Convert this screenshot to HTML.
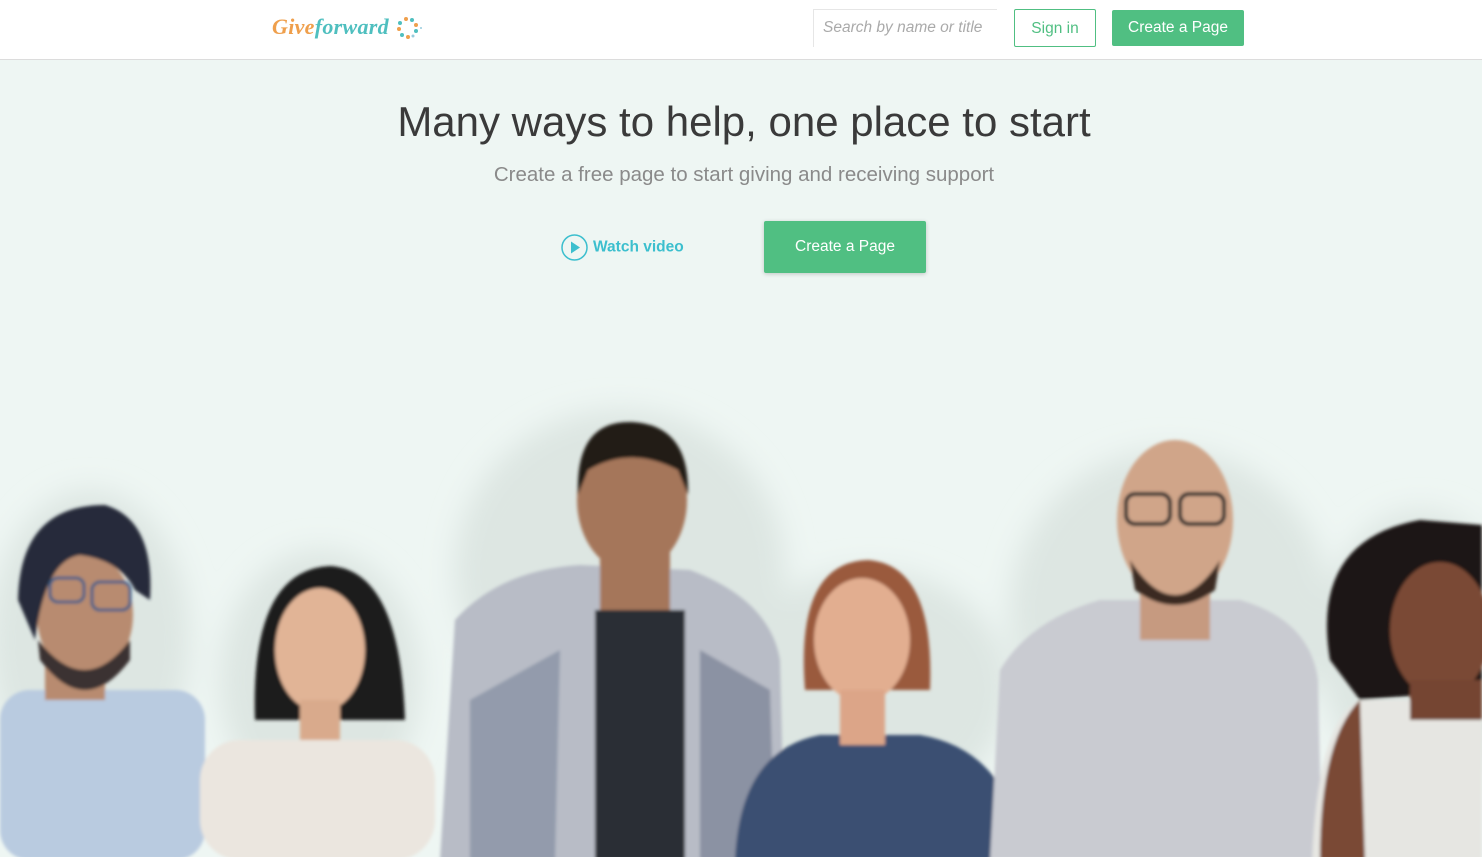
<!DOCTYPE html>
<html><head><meta charset="utf-8"><style>
*{margin:0;padding:0;box-sizing:border-box}
body{width:1482px;height:857px;overflow:hidden;background:#eef6f3;font-family:"Liberation Sans",sans-serif;position:relative}
.hdr{position:absolute;top:0;left:0;width:1482px;height:60px;background:#fff;border-bottom:1px solid #dcdcdc}
.logo{position:absolute;left:272px;top:14px;font:italic bold 22px "Liberation Serif",serif;letter-spacing:0.3px}
.search{position:absolute;left:813px;top:9px;width:184px;height:38px;border:1px solid #e6e6e6;border-right:none;border-bottom:none;background:#fff;color:#aaa;font-style:italic;font-size:15.5px;padding:9px 0 0 9px}
.signin{position:absolute;left:1014px;top:9px;width:82px;height:38px;border:1px solid #50bf82;border-radius:2px;color:#50bf82;font-size:15.5px;text-align:center;line-height:37px}
.cta{position:absolute;left:1112px;top:10px;width:132px;height:36px;background:#50bf82;border-radius:2px;color:#fff;font-size:15.5px;text-align:center;line-height:36px}
h1{position:absolute;top:98px;left:0;width:1488px;text-align:center;font-weight:normal;font-size:42px;color:#3a3a3a}
.sub{position:absolute;top:163px;left:0;width:1488px;text-align:center;font-size:20.5px;color:#8a8a8a}
.watch{position:absolute;left:561px;top:234px;color:#3cbfce;font-weight:bold;font-size:15.5px;line-height:26px}
.watch svg{vertical-align:middle;margin-right:5px}
.cta2{position:absolute;left:764px;top:221px;width:162px;height:52px;background:#50bf82;border-radius:2px;color:#fff;font-size:15.5px;text-align:center;line-height:52px;box-shadow:0 1px 4px rgba(0,0,0,.2)}
.people{position:absolute;left:0;top:0}
</style></head><body>
<svg class="people" width="1482" height="857">
<defs><filter id="b"><feGaussianBlur stdDeviation="14"/></filter><filter id="s"><feGaussianBlur stdDeviation="1.5"/></filter></defs>
<g filter="url(#b)" fill="#dde6e2">
<ellipse cx="90" cy="640" rx="100" ry="150"/><ellipse cx="320" cy="680" rx="100" ry="130"/><ellipse cx="620" cy="570" rx="165" ry="160"/><ellipse cx="870" cy="690" rx="140" ry="120"/><ellipse cx="1170" cy="610" rx="160" ry="160"/><ellipse cx="1420" cy="650" rx="100" ry="140"/>
</g>
<g filter="url(#s)">
<rect x="0" y="690" width="205" height="170" rx="30" fill="#b9cbe0"/>
<rect x="45" y="640" width="60" height="60" fill="#b88b70"/>
<ellipse cx="85" cy="615" rx="48" ry="62" fill="#b88b70"/>
<path d="M38 640 Q85 700 130 640 L130 660 Q85 720 40 660Z" fill="#3a3030"/>
<path d="M18 600 Q20 505 105 505 Q155 520 150 600 L135 590 Q120 560 80 555 Q45 560 35 640Z" fill="#262c3a"/>
<rect x="50" y="578" width="34" height="24" rx="8" fill="none" stroke="#3c5f88" stroke-width="3"/>
<rect x="92" y="582" width="38" height="28" rx="8" fill="none" stroke="#3c5f88" stroke-width="3"/>
<rect x="200" y="740" width="235" height="120" rx="40" fill="#ebe6df"/>
<path d="M255 720 Q250 570 330 566 Q400 570 405 720Z" fill="#1c1a1a"/>
<ellipse cx="320" cy="650" rx="45" ry="62" fill="#e1b496"/>
<rect x="300" y="700" width="40" height="40" fill="#d9aa8c"/>
<path d="M440 860 L455 620 Q500 570 580 565 L690 570 Q770 600 780 660 L785 860Z" fill="#b8bcc6"/>
<path d="M470 700 L560 650 L555 860 L470 860Z" fill="#6e7a92" opacity=".5"/>
<path d="M700 650 L770 690 L775 860 L700 860Z" fill="#5d6880" opacity=".5"/>
<rect x="595" y="610" width="90" height="250" fill="#2c2f36"/>
<rect x="600" y="540" width="70" height="70" fill="#a5765a"/>
<ellipse cx="632" cy="500" rx="55" ry="72" fill="#a5765a"/>
<path d="M578 495 Q575 420 632 422 Q690 425 688 495 L678 470 Q630 445 588 470Z" fill="#231b17"/>
<path d="M735 860 Q740 750 820 735 L920 735 Q1010 750 1025 860Z" fill="#3b5072"/>
<path d="M805 690 Q795 562 868 560 Q935 565 930 690Z" fill="#9a5a3e"/>
<ellipse cx="862" cy="640" rx="48" ry="62" fill="#e2ae90"/>
<rect x="840" y="690" width="45" height="55" fill="#dca588"/>
<path d="M990 860 L1000 670 Q1030 620 1100 600 L1240 600 Q1310 620 1318 680 L1322 860Z" fill="#c9cbd1"/>
<rect x="1140" y="570" width="70" height="70" fill="#c69a80"/>
<ellipse cx="1175" cy="520" rx="58" ry="80" fill="#d0a589"/>
<path d="M1130 560 Q1175 630 1220 560 L1215 590 Q1175 620 1135 590Z" fill="#3b2b22"/>
<rect x="1126" y="494" width="44" height="30" rx="9" fill="none" stroke="#2a2a2a" stroke-width="4"/>
<rect x="1180" y="494" width="44" height="30" rx="9" fill="none" stroke="#2a2a2a" stroke-width="4"/>
<path d="M1312 860 Q1318 720 1360 700 L1482 700 L1482 860Z" fill="#e6e6e2"/>
<path d="M1320 860 Q1320 740 1360 700 L1365 860Z" fill="#7a4a35"/>
<path d="M1330 660 Q1310 540 1420 520 L1482 525 L1482 690 L1360 700Z" fill="#1e1714"/>
<ellipse cx="1440" cy="630" rx="50" ry="68" fill="#7a4a35"/>
<rect x="1410" y="680" width="72" height="40" fill="#744532"/>
</g>
</svg>
<div class="hdr">
<div class="logo"><span style="color:#ef9f4c">Give</span><span style="color:#4fbfbf">forward</span></div>
<svg style="position:absolute;left:395px;top:16px" width="28" height="24">
<circle cx="11" cy="3" r="2" fill="#ef9f4c"/><circle cx="17" cy="4" r="2" fill="#4fbfbf"/><circle cx="5" cy="7" r="2" fill="#4fbfbf"/><circle cx="21" cy="9" r="2" fill="#ef9f4c"/><circle cx="4" cy="13" r="2" fill="#ef9f4c"/><circle cx="21" cy="15" r="2" fill="#4fbfbf"/><circle cx="7" cy="19" r="2" fill="#4fbfbf"/><circle cx="13" cy="21" r="2" fill="#ef9f4c"/><circle cx="18" cy="20" r="1.5" fill="#9cd"/><circle cx="26" cy="12" r="1" fill="#9cd"/>
</svg>
<div class="search">Search by name or title</div>
<div class="signin">Sign in</div>
<div class="cta">Create a Page</div>
</div>
<h1>Many ways to help, one place to start</h1>
<div class="sub">Create a free page to start giving and receiving support</div>
<div class="watch"><svg width="27" height="27"><circle cx="13.5" cy="13.5" r="12.5" fill="none" stroke="#3cbfce" stroke-width="1.5"/><path d="M10 7.5 L19 13.5 L10 19.5Z" fill="#3cbfce"/></svg>Watch video</div>
<div class="cta2">Create a Page</div>
</body></html>
